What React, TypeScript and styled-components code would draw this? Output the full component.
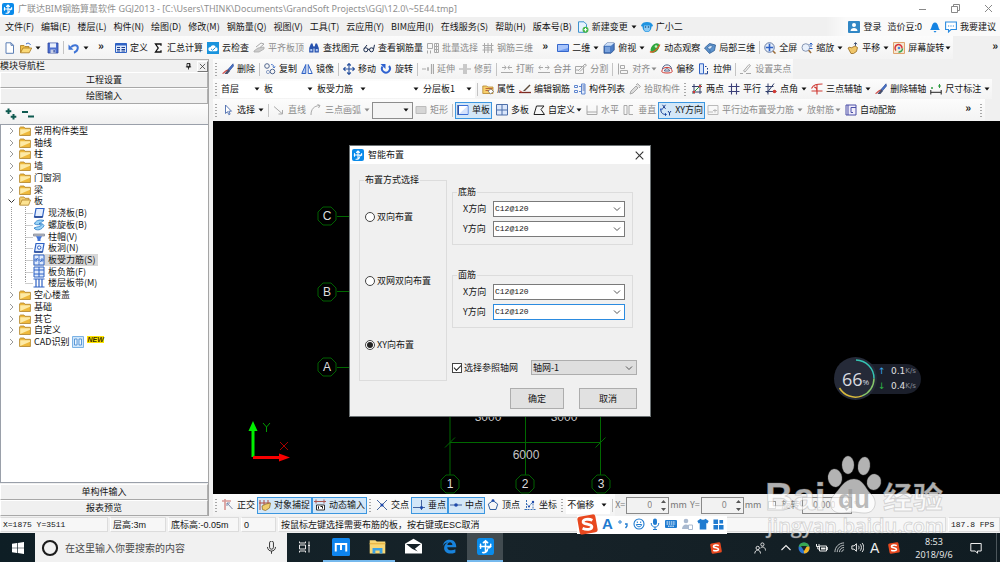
import React from "react";
import styled, { createGlobalStyle, css } from "styled-components";

const Global = createGlobalStyle`
  * { box-sizing: border-box; }
  html, body { margin: 0; padding: 0; }
  body, button, input, select {
    font-family: "Noto Sans CJK SC", sans-serif;
    font-size: 9px;
    line-height: 12px;
    color: #141414;
  }
  button, input, select { margin: 0; padding: 0; border: 0; border-radius: 0; background: transparent; outline: 0; }
  button { cursor: pointer; white-space: nowrap; }
  ul { list-style: none; margin: 0; padding: 0; }
`;

/* ---------- icons ---------- */

const B = "#2f62c4";
const N = "#1d3f8f";
const G = "#a9a9a9";
const R = "#cf3a34";

const art: Record<string, React.ReactNode> = {
  app: (
    <>
      <rect width="12" height="12" rx="2" fill="#0a8bea" />
      <path d="M6 2v8M4 10.2c1.500.4 3.400-.4 3.400-2M2.200 6h7.600M2.500 4.500v2.800M9.700 4.500c0 2-.8 2.500-2 2.500M4.500 3.300L6 2l1.500 1.300" fill="none" stroke="#fff" strokeWidth="1.100" strokeLinecap="round" />
    </>
  ),
  doc: <path d="M2 .8h5l2.500 2.500v8H2zM7 .8v2.500h2.500" fill="#fff" stroke="#5c7fb5" />,
  open: (
    <>
      <path d="M.5 10.500v-7h3.500l1 1h4v2" fill="#f0c04a" stroke="#a9781a" strokeWidth=".8" />
      <path d="M.5 10.800L3 6h8.700l-2.500 4.800z" fill="#fbd976" stroke="#a9781a" strokeWidth=".8" />
      <path d="M6 2c2-1.400 3.500-.8 4.500.8" fill="none" stroke={B} />
    </>
  ),
  save: (
    <>
      <path d="M1 1h10v10H1z" fill="#4d6fd0" stroke="#2c459c" strokeWidth=".8" />
      <path d="M3 1.300h6v4.200H3z" fill="#e9effc" />
      <path d="M3.500 7.500h5V11h-5z" fill="#c7cfe6" />
      <path d="M6.500 8h1.200v2.500H6.500z" fill="#2c459c" />
    </>
  ),
  undo: (
    <>
      <path d="M3 5.200C6 1.800 10 3 9.800 6c-.2 2.400-2 4-3.800 4.700" fill="none" stroke="#3f74d6" strokeWidth="2" />
      <path d="M.5 2.500v5.200h5z" fill="#3f74d6" />
    </>
  ),
  define: (
    <>
      <path d="M.5 1.500h11v9H.5z" fill="#dce8fb" stroke={B} />
      <path d="M.5 1.500h11v2H.5z" fill={B} />
      <path d="M2 5.500h3M2 7.500h3M2 9h3M6.500 5.500h3.500M6.500 7.500h3.500M6.500 9h3.500" stroke={N} />
    </>
  ),
  sigma: <path d="M9 3.800V2H3.500l2.700 4-2.700 4H9V8.200" fill="none" stroke="#111" strokeWidth="1.300" />,
  cloud: (
    <>
      <rect width="12" height="12" fill="#1993dd" />
      <path d="M3.500 9.300a2.200 2.200 0 010-4.400 2.800 2.800 0 015.300.4 2 2 0 01-.3 4z" fill="#fff" />
      <path d="M4 6.800l1.600 1.500L8.500 5.500" fill="none" stroke="#1993dd" />
    </>
  ),
  slabTop: (
    <>
      <path d="M1 9l4-3 6-1v2L6 10H1z" fill="#ccc" stroke={G} strokeWidth=".8" />
      <path d="M3 5l5-4 3 1-4 3.500" fill="none" stroke={G} />
    </>
  ),
  find: (
    <>
      <path d="M1.200 10.500V6L3 1.500h1.500L5.500 5v5.500zM10.800 10.500V6L9 1.500H7.500L6.500 5v5.500z" fill="#2752ae" />
      <path d="M5 4.500h2v2H5z" fill="#2752ae" />
      <path d="M2.300 7h2v2.300h-2zM7.800 7h2v2.300h-2z" fill="#a9c4f5" />
    </>
  ),
  glasses: (
    <path d="M.8 7.800a2 2 0 104 0 2 2 0 10-4 0M6.500 7.800a2 2 0 104 0 2 2 0 10-4 0M4.800 7.300h1.700M1 6.800L4 3M10.500 7.300l1-4.500" fill="none" stroke="#1a2b4d" />
  ),
  batch: (
    <path d="M.5 1.500h5v5h-5zM.5 8.500v3M3.500 8.500v3M7.500 1.500h4v9h-4zM7.500 4.500h4M7.500 7.500h4M9.500 1.500v9" fill="none" stroke={G} />
  ),
  rebar3d: (
    <path d="M2.500 1v10M6 1v10M9.500 1v10M.5 3.500h11M.5 8h11M2.500 5.800h7" fill="none" stroke={G} />
  ),
  flat2d: (
    <>
      <path d="M.5 2.500h11v7H.5z" fill="#6f9bf0" stroke="#3567cc" />
      <path d="M1 3h10v3L1 9z" fill="#a9c5fb" />
    </>
  ),
  cube: (
    <>
      <path d="M1 3.800L4 1h7.200v7L8 11.200H1z" fill="#4b7cc4" stroke="#2a4f8e" strokeWidth=".8" />
      <path d="M1 3.800L4 1h7.200L8 3.800z" fill="#cfe0f7" />
      <path d="M2 5h5v5H2z" fill="#7ba3dc" />
    </>
  ),
  orbit: (
    <>
      <ellipse cx="6" cy="6" rx="3.500" ry="5.500" fill="#2fa63e" transform="rotate(40 6 6)" />
      <path d="M1 9.500c2 2 7-1 10-7" fill="none" stroke="#e05b27" strokeWidth="1.200" />
      <circle cx="7" cy="4.500" r="1.300" fill="#c9f2c2" />
    </>
  ),
  local3d: (
    <>
      <path d="M.5 6l5-4.500 6 1.500-1 5.500-5 3z" fill="#5d93cd" stroke="#2d5c93" strokeWidth=".8" />
      <path d="M3 6l3-2.500 3 .8-3 3zM6 7.500v3" fill="#d5e6f8" stroke="#2d5c93" strokeWidth=".6" />
    </>
  ),
  full: (
    <>
      <circle cx="5.500" cy="5.500" r="4.800" fill="#e3edfb" stroke="#6b7fa5" />
      <path d="M5.500 1.800v7.400M1.800 5.500h7.400" stroke={B} strokeWidth="1.600" />
      <path d="M9 9l2.500 2.500" stroke="#9c6b35" strokeWidth="1.500" />
    </>
  ),
  zoom: (
    <>
      <circle cx="4.800" cy="5.500" r="3.800" fill="#e9f1fc" stroke="#8796b3" />
      <path d="M7.600 8.300l2.500 2.700" stroke="#9c6b35" strokeWidth="1.500" />
      <path d="M10 1v4M8.500 2.500L10 1l1.500 1.500M8.500 6.500h3" fill="none" stroke={B} />
    </>
  ),
  pan: (
    <>
      <path d="M1 6l2-1 1 1 4-2 2.500 1.500-1 4-3 2H4z" fill="#f0c66a" stroke="#94671b" strokeWidth=".8" />
      <path d="M8.500 3.800V.8M7 2.200L8.500.6 10 2.200" fill="none" stroke="#3c4d70" />
    </>
  ),
  screenRot: (
    <>
      <path d="M.5.5h11v11H.5z" fill="#f3e7d2" stroke="#e0a36d" />
      <path d="M3 8.500a3.500 3.500 0 116-2" fill="none" stroke="#d8343a" strokeWidth="1.500" />
      <path d="M9.500 6.500a3.500 3.500 0 01-4 3.500" fill="none" stroke="#38a353" strokeWidth="1.500" />
      <circle cx="6" cy="6" r="1.300" fill="#4b7fdc" />
    </>
  ),
  brush: (
    <>
      <path d="M11 .8L6 6.500l1.500 1.300L11.500 3z" fill="#4b74c9" stroke={N} strokeWidth=".6" />
      <path d="M6 6l2 2-2.500 3H2.500z" fill="#46506e" />
      <path d="M.5 10.500c2-.2 2.500-3 5-3.500" fill="none" stroke={R} strokeWidth="1.100" />
    </>
  ),
  copy: (
    <>
      <circle cx="3" cy="3" r="2.300" fill="none" stroke="#52678f" />
      <circle cx="8.500" cy="8.500" r="2.300" fill="none" stroke="#52678f" />
      <circle cx="4" cy="9" r="1.600" fill="none" stroke="#8ea1c7" />
      <path d="M7 1.500c2 0 3 1 3 3M8.800 3.500L10 5l1.200-1.500" fill="none" stroke={B} strokeWidth=".8" />
    </>
  ),
  mirror: (
    <>
      <path d="M4.800 1.500v9H.8z" fill="#b5ccf5" stroke={B} />
      <path d="M7.200 1.500v9h4z" fill="#fff" stroke={B} />
    </>
  ),
  move: (
    <path d="M6 .5v11M.5 6h11M4.200 2.500L6 .6l1.800 1.900M4.200 9.500L6 11.400l1.800-1.900M2.500 4.200L.6 6l1.900 1.800M9.500 4.200L11.400 6 9.500 7.800" fill="none" stroke="#27509d" strokeWidth="1.100" />
  ),
  rotate: (
    <>
      <path d="M2.500 3.500A4 4 0 109 3" fill="none" stroke="#2f62d0" strokeWidth="2" />
      <path d="M.5 1h5v5z" fill="#2f62d0" />
    </>
  ),
  extend: <path d="M0 6h4M5 6h2M9.500 1v10M11.500 1v10M6 4v4" stroke={G} strokeWidth="1.200" />,
  trim: <path d="M0 6h4M8 6h4M5 1v10M7 1v10" stroke={G} strokeWidth="1.200" />,
  breakIt: <path d="M0 9.500h12M1 4.500h4M7 4.500h4M3.500 2.500L5 4.500 3.500 6.500M8.500 2.500L7 4.500l1.500 2" fill="none" stroke={G} />,
  merge: <path d="M0 9.500h12M1 4.500h4M7 4.500h4M2.500 2.500L1 4.500l1.500 2M9.500 2.500l1.500 2-1.500 2" fill="none" stroke={G} />,
  split: <path d="M.5 3.500h8v7h-8zM3 8l7-7 1.500 1L5 8.500M.5 7h3" fill="none" stroke={G} />,
  align: <path d="M1.500.5v11M3.500 2.500h4v3h-4zM3.500 7.500h7v3h-7z" fill="none" stroke={G} />,
  offset: (
    <>
      <path d="M.8 8.500C.8 3 11.200 3 11.200 8.500c0 2-10.400 2-10.400 0" fill="none" stroke={R} />
      <path d="M1.500 6C2 .5 10 .5 10.500 6M3.500 8c0-3 5-3 5 0z" fill="none" stroke="#4e5f86" />
    </>
  ),
  stretch: (
    <>
      <path d="M1.500.8h4v10h-4z" fill="#d9e6fb" stroke={B} />
      <path d="M7 3.500h1.500M9.500 5v1.500M9.500 8v2.800H6.500" fill="none" stroke={N} />
    </>
  ),
  grip: <path d="M0 10.500h3M6 10.500h5M3.500 8L9 1.500l1.500 1L5 9z" fill="none" stroke={G} />,
  props: (
    <>
      <path d="M.8 3h4l1 1H11v6.500H.8z" fill="#f6cf6c" stroke="#b8862b" strokeWidth=".8" />
      <path d="M3.500 5.500h7M3.500 7.500h7" stroke="#a43c23" strokeWidth=".7" />
      <path d="M6 8l3-2 2.500 2.500-3 2.500z" fill="#fff" stroke="#555" strokeWidth=".6" />
    </>
  ),
  editBar: (
    <>
      <path d="M0 9.500h12" stroke="#7b2b22" strokeWidth="1.300" />
      <path d="M4 8l6.500-6.500 1 1L6 8z" fill="#5c4a3a" />
      <path d="M.5 7.500L3 9.300" stroke={R} />
    </>
  ),
  list: (
    <>
      <path d="M.5 2.500h3v2h-3zM.5 7.500h3v2h-3z" fill="#fff" stroke="#5f86cf" />
      <path d="M5 3.500h2M5 8.500h2" stroke="#5f86cf" />
      <path d="M7.500 1v10h3.500V1z" fill="#e3ecfb" stroke="#5f86cf" />
      <path d="M8.500 3h2M8.500 5h2M8.500 7h2" stroke={N} strokeWidth=".7" />
    </>
  ),
  pick: <path d="M1 11l1-3 5-5 2 2-5 5zM7 2l1.500-1.500 3 3L10 5" fill="#ddd" stroke={G} />,
  twoPt: (
    <>
      <path d="M1 3.500h10M1 9h10M3 1v10M9 1v10" stroke="#33406d" />
      <path d="M1.500 10.500L10.500 1.500" stroke="#2c9b41" />
      <circle cx="9" cy="3.300" r="1.200" fill={R} />
      <circle cx="3" cy="9" r="1.200" fill={R} />
    </>
  ),
  parallel: <path d="M.5 3.500h11M.5 8.500h11M3.500.5v11M8.500.5v11" stroke="#3b3f78" strokeWidth="1.100" />,
  ptAngle: (
    <>
      <path d="M.5 3.500h8M.5 8.500h11M3 .5v11M9 .5L2 10" stroke="#33406d" />
      <circle cx="9.500" cy="8.500" r="1.800" fill={R} />
    </>
  ),
  arcAxis: (
    <path d="M.5 5.500c2-4 5-4.500 11-4.500M.5 8h11M6 2v9.500M3 4c3 0 3 3 3 7" fill="none" stroke={R} strokeWidth="1.100" />
  ),
  dim: (
    <>
      <path d="M.8 7v4.500M11.200 7v4.500M.8 9.300h10.400" stroke="#222" />
      <circle cx="2" cy="5" r="1" fill="#2c9b41" />
      <path d="M9.500 1v4M8 3h3" stroke="#2c9b41" />
    </>
  ),
  cursor: <path d="M3.500 1v8.500l2-1.800 1.300 3 1.300-.6-1.300-2.900H9.500z" fill="#fff" stroke="#4a6bad" strokeWidth=".9" />,
  line: <path d="M1 2.500l8 7M9.500 6v4h-4" fill="none" stroke={G} />,
  arc: <path d="M1 11C1 5 4 2 9.500 1.500M7.500.5L10 1.500 8.500 4" fill="none" stroke={G} />,
  rect: <path d="M1 2.500h10v7H1z" fill="#d6d6d6" stroke="#bcbcbc" />,
  single: (
    <>
      <path d="M1.500 1.500h9.500v9H1.500z" fill="#fff" stroke="#3b6fd8" />
      <path d="M2 10l8.500-8v8z" fill="#d5e3fc" />
      <path d="M1 1v10" stroke={N} strokeWidth="1.200" />
    </>
  ),
  multi: (
    <>
      <path d="M.5.5h11v10.500H.5z" fill="#dbe7fb" stroke="#4d6fa9" />
      <path d="M6 .5v10.500M.5 6h11" stroke="#4d6fa9" />
    </>
  ),
  custom: <path d="M1 10.500L3.500 2h7.500L8 5.500l3.500 5H1z" fill="none" stroke="#222" />,
  horiz: <path d="M1 1.500v9h10v-9M1 8h10" fill="none" stroke={G} />,
  vert: <path d="M1 1.500h3v9h-3zM10 1.500H6v9h4" fill="none" stroke={G} />,
  xy: (
    <>
      <path d="M1 5c-.5 3 1 5.500 5 5.500M2.500.8l3 4M5.500.8l-3 4M8 7l1.500 2L11 7M9.500 9v2.500" fill="none" stroke={N} />
      <path d="M0 6.500l1-2 1.500 1.500M5 9l1.500 1.500L5 12" fill="none" stroke={B} />
    </>
  ),
  edge: <path d="M1 1.500h10v9H1zM1 8h5M8 5v3.500M6 6.500h4" fill="none" stroke="#bbb" />,
  auto: (
    <>
      <path d="M1 1h10v10H1z" fill="#f0edfa" stroke="#4a4fa6" />
      <path d="M3 1v10M6 3.500h5M6 3.500v5h2" fill="none" stroke="#4a4fa6" />
    </>
  ),
  newDoc: (
    <>
      <path d="M1.500.8h5.500l2.500 2.500v8h-8z" fill="#e6f2fd" stroke="#3d92cf" />
      <circle cx="8.500" cy="8.700" r="3" fill="#45b649" />
      <path d="M8.500 7v3.400M6.800 8.700h3.400" stroke="#fff" />
    </>
  ),
  robot: (
    <>
      <path d="M0 4.500C1 2 3 1 6 1s5 1 6 3.500c-.3 1-1 1-1.500 1C10.500 9 8.500 11 6 11S1.500 9 1.500 5.500c-.5 0-1.200 0-1.500-1z" fill="#1f93e0" />
      <path d="M3 4.500h6v3a3 3 0 01-6 0z" fill="#8ccbf5" />
      <circle cx="4.500" cy="6" r=".8" fill="#124a7d" />
      <circle cx="7.500" cy="6" r=".8" fill="#124a7d" />
    </>
  ),
  login: (
    <>
      <rect width="12" height="12" rx="1" fill="#3187c5" />
      <circle cx="6" cy="4" r="2" fill="#fff" />
      <path d="M2.500 10c0-4 7-4 7 0z" fill="#fff" />
    </>
  ),
  bell: (
    <>
      <path d="M1 9c2-1.500 1.500-7.500 5-7.500S9 7.500 11 9z" fill="#1583e2" />
      <path d="M4.500 10h3L6 11.800z" fill="#1583e2" />
    </>
  ),
  chat: (
    <>
      <path d="M.6 1h10.800v7.500H6L3.500 11V8.500H.6z" fill="#fff" stroke="#2a8be0" strokeWidth="1.100" />
      <path d="M3 5h1.200M5.400 5h1.200M7.800 5H9" stroke="#2a8be0" strokeWidth="1.200" />
    </>
  ),
  ortho: (
    <>
      <path d="M0 2h9M3 0v11" stroke="#d99a98" strokeWidth="1.700" />
      <path d="M5 4l5.500 6M5 4v3M5 4h3" fill="none" stroke="#7b88a8" />
    </>
  ),
  snap: (
    <>
      <path d="M1 1v10M5 1v5M0 4h11M9 1v4" stroke="#b04a40" />
      <path d="M3 7l4-2 4.500-1-1 5-4 2.500-3-1z" fill="#f0cd6c" stroke="#94702a" strokeWidth=".8" />
    </>
  ),
  dyn: (
    <>
      <path d="M0 2.500h12M2 .5v4M10 .5v4" stroke="#a95450" />
      <path d="M2.500 6h8v5h-8z" fill="#fff" stroke="#333" />
      <path d="M4.500 7.300v2.500M6.500 7.500h2v2" fill="none" stroke="#111" />
    </>
  ),
  cross: (
    <>
      <path d="M1 1l10 10M11 1L1 11" stroke="#44659f" />
      <circle cx="6" cy="6" r="1.600" fill="#1d49ab" />
    </>
  ),
  perp: (
    <>
      <path d="M0 8.500h12M8.500 1v10" stroke="#44659f" />
      <circle cx="8.500" cy="8.500" r="1.600" fill="#1d49ab" />
    </>
  ),
  mid: (
    <>
      <path d="M0 6h12" stroke="#44659f" />
      <circle cx="6" cy="6" r="1.800" fill="#1d49ab" />
    </>
  ),
  vertex: (
    <>
      <path d="M6 1.500l4.700 3.600L9 10.500H3L1.300 5.100z" fill="none" stroke="#33609f" />
      <circle cx="6" cy="1.600" r="1.400" fill="#1d49ab" />
    </>
  ),
  coord: (
    <>
      <path d="M.5 10.500h11M2.500 1v10M2.500 5L5 7.500 9 2.500v8" fill="none" stroke="#3b70b5" strokeDasharray="2 1" />
      <circle cx="9" cy="3" r="1.200" fill="#1d49ab" />
      <circle cx="5" cy="7.500" r="1" fill="#1d49ab" />
    </>
  ),
  plus2: (
    <path d="M3.500.5v5.500M.7 3.200h5.600M8.500 6v5.500M5.700 8.800h5.600" stroke="#0f5a50" strokeWidth="2" />
  ),
  minus2: <path d="M0 4h6M6 8.500h6" stroke="#0f5a50" strokeWidth="2" />,
  pin: <path d="M4 2h4v4.500H4zM2.500 6.500h7M6 6.500V10M7.200 2v4.500" fill="none" stroke="#111" strokeWidth="1.100" />,
  close: <path d="M2.500 2.500l7 7M9.500 2.500l-7 7" stroke="#333" strokeWidth="1" />,
  folder: (
    <>
      <path d="M.6 10.500V2.800L1.500 2H5l1 1.300h5.400v7.200z" fill="#eeb93c" stroke="#b08127" strokeWidth=".8" />
      <path d="M1.200 4.200h9.800v1.500L1.200 10z" fill="#fdeaa6" />
    </>
  ),
  folderOpen: (
    <>
      <path d="M.6 10V2.800L1.500 2H5l1 1.300h4V5" fill="#f4d072" stroke="#b08127" strokeWidth=".8" />
      <path d="M.8 10.200L3 5h8.600l-2 5.200z" fill="#fce392" stroke="#b08127" strokeWidth=".8" />
    </>
  ),
  tSlab: (
    <>
      <path d="M3 1.500h8l-1.500 8.500h-8z" fill="#e4eefe" stroke={B} strokeWidth="1.200" />
      <path d="M1.500 10h8" stroke={N} strokeWidth="1.600" />
    </>
  ),
  tSpiral: (
    <path d="M11 1.500C6 0 2 2 1.500 5c3 1.500 5 0 7 1-1.500 2-4 1.500-7.500 3 2 3 8 2.500 10-2.500-1-2-3-2-5-2C8 4 9 2.500 11 1.500z" fill="#9ad4f7" stroke="#2878c5" strokeWidth=".8" />
  ),
  tCap: (
    <>
      <path d="M.5 3h11v2H.5z" fill="#b7bcc5" stroke="#7b828f" strokeWidth=".7" />
      <path d="M3 5.200h6L7.500 8v2h-3V8z" fill="#4375d6" />
    </>
  ),
  tHole: (
    <>
      <path d="M3 1.500h8l-1.500 8.500h-8z" fill="#e4eefe" stroke={B} strokeWidth="1.200" />
      <circle cx="6.200" cy="5.600" r="1.700" fill="#fff" stroke={B} />
      <path d="M1.500 10h8" stroke={N} strokeWidth="1.400" />
    </>
  ),
  tForce: (
    <>
      <path d="M1 1h10v10H1z" fill="#e0ebfd" stroke={B} />
      <path d="M1 6h10M6 1v10M3 4v4M9 4v4M3 6l2-2M9 6L7 8" fill="none" stroke={B} strokeWidth=".8" />
    </>
  ),
  tNeg: (
    <>
      <path d="M1 1h10v10H1z" fill="#e0ebfd" stroke={B} />
      <path d="M1 4h10M1 8h10M6 1v10" fill="none" stroke={B} />
    </>
  ),
  tBand: <path d="M.5 2h11M.5 10h11M3 2v8M6 2v8M9 2v8" stroke={B} strokeWidth="1.200" />,
  cad: (
    <>
      <path d="M.5.5h11v11H.5z" fill="#cfe6fb" stroke="#7bb2e4" />
      <path d="M2.500 3h2.500v6H2.500zM7 3h2.500v6H7z" fill="#eef7ff" stroke="#3c83cd" strokeWidth=".8" />
    </>
  ),
  sogou: (
    <>
      <rect x=".8" y=".8" width="10.400" height="10.400" rx="1.500" fill="#e8481f" transform="rotate(-10 6 6)" />
      <path d="M8.800 3.600C6.500 2.500 3.400 3 3.500 4.600c.1 1.500 5 .9 5 2.700 0 1.700-3.200 1.900-5.300.9" fill="none" stroke="#fff" strokeWidth="1.600" />
    </>
  ),
  win: <path d="M0 1.700l5-.7v4.700H0zM5.700.9L12 0v5.700H5.700zM0 6.300h5V11l-5-.7zM5.700 6.300H12V12l-6.300-.9z" fill="#fff" />,
  ring: <circle cx="6" cy="6" r="4.700" fill="none" stroke="#1c1c1c" strokeWidth="1.400" />,
  mic: <path d="M4.200 1.800a1.800 1.800 0 013.600 0v4a1.800 1.800 0 01-3.600 0zM2.300 5.500c0 5 7.400 5 7.400 0M6 9.300v2.500" fill="none" stroke="#333" strokeWidth=".9" />,
  task: <path d="M.5.500v1.500h6V.5M.5 4h6v4h-6zM.5 11.500V10h6v1.500M10 .5v11M9 4.500h2" fill="none" stroke="#e8e8e8" />,
  max: (
    <>
      <rect width="12" height="12" rx="1" fill="#0f85ee" />
      <path d="M2.500 9V4h7v5M6 4v4" fill="none" stroke="#fff" strokeWidth="1.300" />
    </>
  ),
  explorer: (
    <>
      <path d="M.5 1.500h4l1 1h6v8.500H.5z" fill="#f8d775" />
      <path d="M.5 3.500h11v1H.5z" fill="#e9b84a" />
      <path d="M2.500 11V7h7v4h-2V8.800h-3V11z" fill="#3ba1e2" />
    </>
  ),
  mail: (
    <>
      <path d="M0 4l6-3.500L12 4v7H0z" fill="#fff" />
      <path d="M.8 4.300h10.400L7 7.500 9 9.500 5 7.500z" fill="#152127" />
    </>
  ),
  ie: (
    <path d="M.6 5.500C1.300 2 3.500.5 6.200.5c3.300 0 5.300 2.300 5.200 6H4.200c.2 2.700 3.600 3.200 6.500 1.700v2.500C6 13 1.500 11 1.700 7 1.800 5 3 3.500 4.800 2.800 2.800 2.900 1.500 4 .6 5.500zM4.300 4.700h4C8.300 2 4.600 2 4.300 4.700z" fill="#1883dc" />
  ),
  people: (
    <path d="M2 6a1.700 1.700 0 103.400 0A1.700 1.700 0 102 6M.8 11.500c0-4.500 5.700-4.500 5.700 0M6.800 2.500a1.600 1.600 0 103.200 0 1.600 1.600 0 10-3.200 0M6.500 6c2-2 5-.8 5 2.500" fill="none" stroke="#eee" strokeWidth=".9" />
  ),
  up: <path d="M1.500 8L6 3.500 10.500 8" fill="none" stroke="#eee" strokeWidth="1.100" />,
  tri: (
    <>
      <circle cx="6" cy="6" r="5.500" fill="#2b74d2" />
      <path d="M.7 4.500A5.500 5.500 0 0111.300 4.500L6 6z" fill="#38a852" />
      <path d="M11.300 4.500A5.500 5.500 0 016 11.500L5.500 5z" fill="#f4b526" />
      <path d="M3 4h6L6 9z" fill="#172228" />
    </>
  ),
  battery: (
    <>
      <path d="M3.500 4h7v5h-7zM10.500 5.500h1.200v2h-1.200" fill="none" stroke="#eee" />
      <path d="M5 5.500h4.500v2H5z" fill="#eee" />
      <path d="M.5 2v2.500h2.500V2M1.800 4.500V7h2" fill="none" stroke="#eee" />
    </>
  ),
  wifi: (
    <path d="M1 11C1 5.500 5.500 1 11 1M3.500 11C3.500 7 7 3.500 11 3.500M6 11c0-3 2-5 5-5M8.500 11c0-1.500 1-2.500 2.500-2.500" fill="none" stroke="#c9ced0" strokeWidth="1" />
  ),
  vol: (
    <path d="M.8 4.500h2L5 2.500v7l-2.200-2h-2zM6.800 4.300c.8 1 .8 2.400 0 3.400M8.500 3c1.500 1.700 1.500 4.300 0 6M10.200 1.800c2 2.300 2 6.100 0 8.400" fill="none" stroke="#eee" strokeWidth=".9" />
  ),
  notif: <path d="M.8 1.500h10.400v7.500H7.500v2.300L5.300 9H.8z" fill="none" stroke="#eee" />,
  smile: (
    <>
      <circle cx="6" cy="6" r="5" fill="none" stroke="#1f7bd0" strokeWidth="1.100" />
      <path d="M3.300 6.500c.5 3 4.900 3 5.400 0z" fill="none" stroke="#1f7bd0" />
      <path d="M4.300 3.500v1.500M7.700 3.500v1.500" stroke="#1f7bd0" />
    </>
  ),
  micBlue: (
    <>
      <rect x="4" y=".5" width="4" height="6.500" rx="2" fill="#1f7bd0" />
      <path d="M2.200 5c0 5.500 7.600 5.500 7.600 0M6 9v2.500M4 11.500h4" fill="none" stroke="#1f7bd0" />
    </>
  ),
  kb: (
    <>
      <rect y="2" width="12" height="8" rx="1" fill="#1f7bd0" />
      <path d="M1.500 4h9M1.500 6h9M3 8.200h6" stroke="#fff" strokeDasharray="1.500 .7" />
    </>
  ),
  person: (
    <>
      <circle cx="5" cy="3" r="2.300" fill="#a9b9cf" />
      <path d="M1 11c0-6 8-6 8 0z" fill="#a9b9cf" />
      <path d="M7.500 7h4v4.500h-4z" fill="#fff" stroke="#a9b9cf" />
    </>
  ),
  shirt: <path d="M.3 3L3.500.8c1 1.400 4 1.400 5 0L11.700 3l-1.300 2.500L9.300 5v6.500H2.700V5l-1.100.5z" fill="#1f7bd0" />,
  tiles: <path d="M.5.5h5v5h-5zM.5 6.500h5v5h-5zM6.500 6.500h5v5h-5zM7 1h4v4H7z" fill="#1f7bd0" />,
  comma: (
    <>
      <circle cx="3" cy="4" r="1.200" fill="none" stroke="#1f7bd0" />
      <path d="M8 6h2v2l-1.500 2" fill="none" stroke="#1f7bd0" strokeWidth="1.300" />
    </>
  ),
};

const IconSvg = styled.svg<{ $s: number }>`
  display: block;
  flex: none;
  width: ${(p) => p.$s}px;
  height: ${(p) => p.$s}px;
`;

const Icon = ({ name, size = 12 }: { name: string; size?: number }) => (
  <IconSvg $s={size} viewBox="0 0 12 12" aria-hidden="true">
    {art[name]}
  </IconSvg>
);

const CaretSvg = styled.svg<{ $tight?: boolean }>`
  flex: none;
  width: 6px;
  height: 4px;
  margin-left: ${(p) => (p.$tight ? "-2px" : 0)};
`;
const Caret = ({ dim, tight }: { dim?: boolean; tight?: boolean }) => (
  <CaretSvg $tight={tight} viewBox="0 0 6 4" aria-hidden="true">
    <path d="M.5.5h5L3 3.500z" fill={dim ? "#8a8a8a" : "#111"} />
  </CaretSvg>
);

const Chevron = () => (
  <svg width="8" height="6" viewBox="0 0 8 6" aria-hidden="true">
    <path d="M1 1.500l3 3 3-3" fill="none" stroke="#555" />
  </svg>
);

/* ---------- frame ---------- */

const Page = styled.div`
  display: flex;
  flex-direction: column;
  min-height: 100vh;
  background: #f0f0f0;
  position: relative;
  overflow: hidden;
`;

const TitleBar = styled.header`
  display: flex;
  align-items: center;
  gap: 4px;
  height: 17px;
  padding: 0 6px 0 2px;
  background: #fff;
  color: #8f8f8f;
  white-space: nowrap;
`;
const TitleText = styled.span`
  flex: 1;
  font-family: "Noto Sans", "Noto Sans CJK SC", sans-serif;
`;
const WindowButtons = styled.div`
  display: flex;
  gap: 22px;
`;
const WindowButton = styled.button`
  width: 11px;
  height: 11px;
`;

const MenuBar = styled.nav`
  display: flex;
  align-items: center;
  height: 19px;
  padding-left: 5px;
  white-space: nowrap;
`;
const MenuList = styled.div`
  display: flex;
  gap: 7px;
  margin-right: 3px;
`;
const Account = styled.div`
  display: flex;
  align-items: center;
  height: 19px;
  margin-left: auto;
  padding: 0 2px 0 20px;
  background: linear-gradient(90deg, #f0f0f0, #fafafa 20px);
`;

const ToolRow = styled.div<{ $h: number }>`
  display: flex;
  align-items: center;
  height: ${(p) => p.$h}px;
  flex: none;
  overflow: hidden;
`;
const ToolGroup = styled.div`
  display: flex;
  align-items: center;
  height: 100%;
  background: linear-gradient(#fcfcfc, #f3f3f3);
`;
const ToolButton = styled.button<{ $on?: boolean; $dim?: boolean }>`
  display: flex;
  flex: none;
  align-items: center;
  gap: 3px;
  height: 17px;
  padding: 0 1px;
  border: 1px solid transparent;
  color: #141414;
  ${(p) => p.$dim && css`color: #8c8c8c;`}
  ${(p) => p.$on && css`border-color: #3c97e0; background: #d3e7f8;`}
`;
const Sep = styled.span`
  flex: none;
  width: 1px;
  height: 13px;
  margin: 0 2px;
  background: #c4c4c4;
`;
const Grip = styled.span`
  flex: none;
  width: 2px;
  height: 13px;
  margin: 0 3px 0 2px;
  background: repeating-linear-gradient(#a8a8a8 0 1px, transparent 1px 3px);
`;
const Gap = styled.span<{ $w: number }>`
  flex: none;
  width: ${(p) => p.$w}px;
`;
const Overflow = styled.button`
  flex: none;
  width: 20px;
  height: 17px;
  padding-bottom: 6px;
  font-weight: 700;
  font-size: 11px;
  line-height: 10px;
`;

type ToolProps = { icon?: string; text?: string; on?: boolean; dim?: boolean; caret?: boolean; tight?: boolean; label?: string };
const Tool = ({ icon, text, on, dim, caret, tight, label }: ToolProps) => (
  <ToolButton type="button" $on={on} $dim={dim} aria-label={label}>
    {icon && <Icon name={icon} />}
    {text}
    {(caret || tight) && <Caret dim={dim} tight={tight} />}
  </ToolButton>
);

const SelectBox = styled.span<{ $w: number; $edge?: string; $bg?: string; $h?: number }>`
  display: flex;
  flex: none;
  align-items: center;
  width: ${(p) => p.$w}px;
  height: ${(p) => p.$h ?? 17}px;
  padding: 0 3px 0 1px;
  background: ${(p) => p.$bg ?? "#fff"};
  border: ${(p) => (p.$edge ? `1px solid ${p.$edge}` : "0")};
`;
const PlainSelect = styled.select<{ $mono?: boolean }>`
  appearance: none;
  flex: 1;
  min-width: 0;
  ${(p) => p.$mono && css`font-family: "Liberation Mono", monospace; font-size: 8px;`}
`;
const ToolSelect = ({ w, value, label, edge }: { w: number; value: string; label: string; edge?: string }) => (
  <SelectBox $w={w} $edge={edge} $bg={edge ? "#f4f4f4" : undefined}>
    <PlainSelect aria-label={label} defaultValue={value}>
      <option>{value}</option>
    </PlainSelect>
    <Caret />
  </SelectBox>
);

/* ---------- navigation panel ---------- */

const Work = styled.div`
  display: flex;
  flex: 1;
  min-height: 0;
`;
const Side = styled.aside`
  display: flex;
  flex-direction: column;
  flex: none;
  width: 209px;
  margin-right: 4px;
  border-right: 1px solid #a5a5a5;
`;
const SideHead = styled.div`
  display: flex;
  align-items: center;
  height: 13px;
  border-top: 1px solid #b0b0b0;
  span { flex: 1; }
`;
const SideClose = styled.button`
  width: 11px;
  height: 11px;
  margin-left: 4px;
  border: 1px solid;
  border-color: #fff #777 #777 #fff;
`;
const SideButton = styled.button`
  height: 16px;
  border: 1px solid;
  border-color: #fff #b0b0b0 #a8a8a8 #fff;
  background: #f0f0f0;
`;
const SideTools = styled.div`
  display: flex;
  align-items: center;
  gap: 5px;
  height: 20px;
  padding-left: 5px;
  background: linear-gradient(#fdfdfd, #f0f0f0);
  button { height: 12px; }
`;
const TreeBox = styled.div`
  flex: 1;
  border: 1px solid #9aa0aa;
  border-width: 1px 0 1px 1px;
  background: #fff;
  margin-bottom: 1px;
`;
const Tree = styled.ul`
  display: grid;
  grid-auto-rows: 1fr;
  height: 223px;
`;
const TreeRow = styled.li`
  display: flex;
  align-items: center;
  padding-left: 5px;
  white-space: nowrap;
  min-height: 0;
`;
const Toggle = styled.svg`
  width: 10px;
  height: 8px;
  margin-right: 3px;
`;
const Guides = styled.svg`
  flex: none;
  width: 22px;
  height: 12px;
  margin-left: 5px;
`;
const Node = styled.span<{ $sel?: boolean }>`
  display: flex;
  align-items: center;
  gap: 3px;
  height: 12px;
  padding-right: 3px;
  background: ${(p) => (p.$sel ? "#d9d9d9" : "transparent")};
`;
const NewTag = styled.b`
  align-self: flex-start;
  height: 7px;
  background: #ffe400;
  color: #3a3000;
  font: italic 700 7px/7px "Liberation Sans", sans-serif;
`;

const tree: { text: string; icon?: string; open?: boolean; sel?: boolean; fresh?: boolean; last?: boolean }[] = [
  { text: "常用构件类型" },
  { text: "轴线" },
  { text: "柱" },
  { text: "墙" },
  { text: "门窗洞" },
  { text: "梁" },
  { text: "板", open: true },
  { text: "现浇板(B)", icon: "tSlab" },
  { text: "螺旋板(B)", icon: "tSpiral" },
  { text: "柱帽(V)", icon: "tCap" },
  { text: "板洞(N)", icon: "tHole" },
  { text: "板受力筋(S)", icon: "tForce", sel: true },
  { text: "板负筋(F)", icon: "tNeg" },
  { text: "楼层板带(M)", icon: "tBand", last: true },
  { text: "空心楼盖" },
  { text: "基础" },
  { text: "其它" },
  { text: "自定义" },
  { text: "CAD识别", fresh: true },
];

const Navigation = () => (
  <Side>
    <SideHead>
      <span>模块导航栏</span>
      <button type="button" aria-label="固定"><Icon name="pin" size={9} /></button>
      <SideClose type="button" aria-label="关闭"><Icon name="close" size={9} /></SideClose>
    </SideHead>
    <SideButton type="button">工程设置</SideButton>
    <SideButton type="button">绘图输入</SideButton>
    <SideTools>
      <button type="button" aria-label="展开"><Icon name="plus2" /></button>
      <button type="button" aria-label="折叠"><Icon name="minus2" /></button>
    </SideTools>
    <TreeBox>
      <Tree>
        {tree.map((n) =>
          n.icon ? (
            <TreeRow key={n.text}>
              <Guides viewBox="0 0 22 12" aria-hidden="true">
                <path d={`M.5 0v12M14.500 0v${n.last ? 6 : 12}M14.500 6.500h7`} stroke="#9a9a9a" strokeDasharray="1 1" fill="none" />
              </Guides>
              <Node $sel={n.sel}>
                <Icon name={n.icon} />
                {n.text}
              </Node>
            </TreeRow>
          ) : (
            <TreeRow key={n.text}>
              <Toggle viewBox="0 0 10 8" aria-hidden="true">
                <path d={n.open ? "M2.500 2.500l3 3 3-3" : "M4 1l3 3-3 3"} fill="none" stroke={n.open ? "#333" : "#999"} />
              </Toggle>
              <Node>
                <Icon name={n.open ? "folderOpen" : "folder"} />
                {n.text}
                {n.fresh && (
                  <>
                    <Icon name="cad" />
                    <NewTag>NEW</NewTag>
                  </>
                )}
              </Node>
            </TreeRow>
          )
        )}
      </Tree>
    </TreeBox>
    <SideButton type="button">单构件输入</SideButton>
    <SideButton type="button">报表预览</SideButton>
  </Side>
);

/* ---------- drawing area ---------- */

const Main = styled.main`
  display: flex;
  flex-direction: column;
  flex: 1;
  min-width: 0;
`;
const Canvas = styled.section`
  position: relative;
  flex: 1;
  min-height: 373px;
  background: #000;
  overflow: hidden;
`;
const Drawing = styled.svg`
  display: block;
  width: 787px;
  height: 373px;
  font-family: "Liberation Sans", sans-serif;
  font-size: 12px;
`;

const Bubble = ({ x, y, t }: { x: number; y: number; t: string }) => (
  <g>
    <path
      d={`M${x - 4} ${y - 9}h8l5 5v8l-5 5h-8l-5-5v-8z`}
      fill="#000"
      stroke="#006000"
    />
    <text x={x} y={y + 4} fill="#dedede" textAnchor="middle">{t}</text>
  </g>
);

const Axes = () => (
  <Drawing viewBox="0 0 787 373" aria-label="轴网">
    <g stroke="#006800" fill="none">
      <path d="M124 95.500h60M124 170.500h60M124 246.500h60" />
      <path d="M237 250.500V354M312.500 250v104M387.500 250v104M237 321.500h151M232 326.500l10-10M382.500 326.500l10-10" />
    </g>
    <g fill="#c4c4c4" textAnchor="middle">
      <text x="275" y="300">3000</text>
      <text x="351" y="300">3000</text>
      <text x="313" y="338">6000</text>
    </g>
    <Bubble x={114} y={95} t="C" />
    <Bubble x={114} y={171} t="B" />
    <Bubble x={114} y={246} t="A" />
    <Bubble x={237} y={363} t="1" />
    <Bubble x={312} y={363} t="2" />
    <Bubble x={388} y={363} t="3" />
    <path d="M38.500 336h3v-26h3l-4.500-10-4.500 10h3z" fill="#00f000" />
    <path d="M40 335v3h26v2.500l11-4-11-4v2.500z" fill="#f80000" />
    <path d="M50 302l3.500 4 3.500-4M53.500 306v5" stroke="#009a00" fill="none" />
    <path d="M67 321l8 8M75 321l-8 8" stroke="#a80000" fill="none" />
  </Drawing>
);

const Gauge = styled.div`
  position: absolute;
  left: 621px;
  top: 236px;
  display: flex;
  align-items: center;
`;
const Dial = styled.div`
  position: relative;
  z-index: 1;
  display: flex;
  align-items: center;
  justify-content: center;
  width: 43px;
  height: 43px;
  border-radius: 50%;
  background: #252a38;
  color: #d9dbe0;
  font: 18px/20px "Open Sans", sans-serif;
  small { font-size: 8px; align-self: center; padding-top: 6px; }
  svg { position: absolute; inset: 0; }
`;
const Speeds = styled.div`
  width: 54px;
  height: 30px;
  margin-left: -10px;
  padding-left: 10px;
  border-radius: 0 15px 15px 0;
  background: #1b1f2b;
`;
const Speed = styled.div<{ $c: string }>`
  display: flex;
  align-items: center;
  height: 15px;
  color: #e0e0e0;
  font: 9px/12px "DejaVu Sans", sans-serif;
  i { width: 14px; padding-left: 1px; color: ${(p) => p.$c}; font-style: normal; }
  small { color: #8b8f99; font-size: 7px; }
`;

/* ---------- dialog ---------- */

const Dialog = styled.form`
  position: absolute;
  left: 136px;
  top: 24px;
  width: 302px;
  height: 272px;
  border: 1px solid #6d7375;
  background: #f0f0f0;
`;
const DialogTitle = styled.div`
  display: flex;
  align-items: center;
  gap: 4px;
  height: 18px;
  padding: 0 4px 0 2px;
  background: #fff;
  span { flex: 1; }
`;
const DialogBody = styled.div`
  display: flex;
  align-items: flex-start;
  gap: 5px;
  padding: 10px 13px 10px 9px;
`;
const Group = styled.fieldset`
  min-width: 0;
  margin: 0;
  padding: 3px 7px 7px 10px;
  border: 1px solid #dcdcdc;
  legend { margin-left: -6px; padding: 0 1px; line-height: 12px; }
`;
const ModeGroup = styled(Group)`
  width: 88px;
  padding: 25px 0 28px 5px;
  legend { margin-left: -1px; }
`;
const Modes = styled.div`
  display: flex;
  flex-direction: column;
  gap: 52px;
  padding-bottom: 1px;
`;
const Check = styled.label`
  display: flex;
  align-items: center;
  gap: 2px;
  height: 12px;
  white-space: nowrap;
  input {
    appearance: none;
    flex: none;
    display: grid;
    place-items: center;
    width: 10px;
    height: 10px;
    border: 1px solid #444;
    background: #fff;
  }
  input[type="radio"] { border-radius: 50%; }
  input[type="radio"]:checked::before {
    content: "";
    width: 6px;
    height: 6px;
    border-radius: 50%;
    background: #222;
  }
  input[type="checkbox"]:checked::before {
    content: "";
    width: 6px;
    height: 3px;
    margin-bottom: 2px;
    border: solid #222;
    border-width: 0 0 1px 1px;
    transform: rotate(-45deg);
  }
`;
const Settings = styled.div`
  display: flex;
  flex-direction: column;
  flex: 1;
  padding-top: 12px;
`;
const BarGroup = styled(Group)`
  margin: 0 4px 24px 0;
`;
const Fields = styled.div`
  display: grid;
  gap: 4px;
`;
const Field = styled.label`
  display: flex;
  align-items: center;
  gap: 7px;
  span:first-child { width: 23px; white-space: nowrap; }
`;
const RefRow = styled.div`
  display: flex;
  align-items: center;
  justify-content: space-between;
  margin-top: 8px;
`;
const Actions = styled.div`
  display: flex;
  justify-content: flex-end;
  gap: 15px;
  margin-top: 13px;
`;
const Push = styled.button`
  width: 54px;
  height: 21px;
  border: 1px solid #adadad;
  background: #e1e1e1;
  &:last-child { width: 58px; }
`;

const BarField = ({ label, focus }: { label: string; focus?: boolean }) => (
  <Field>
    <span>{label}</span>
    <SelectBox $w={132} $h={16} $edge={focus ? "#2b8be0" : "#7a7a7a"}>
      <PlainSelect $mono defaultValue="C12@120">
        <option>C12@120</option>
      </PlainSelect>
      <Chevron />
    </SelectBox>
  </Field>
);

const SmartDialog = () => (
  <Dialog onSubmit={(e) => e.preventDefault()} aria-label="智能布置">
    <DialogTitle>
      <Icon name="app" />
      <span>智能布置</span>
      <button type="button" aria-label="关闭"><Icon name="close" size={13} /></button>
    </DialogTitle>
    <DialogBody>
      <ModeGroup>
        <legend>布置方式选择</legend>
        <Modes>
          <Check><input type="radio" name="mode" />双向布置</Check>
          <Check><input type="radio" name="mode" />双网双向布置</Check>
          <Check><input type="radio" name="mode" defaultChecked />XY向布置</Check>
        </Modes>
      </ModeGroup>
      <Settings>
        <BarGroup>
          <legend>底筋</legend>
          <Fields>
            <BarField label="X方向" />
            <BarField label="Y方向" />
          </Fields>
        </BarGroup>
        <BarGroup>
          <legend>面筋</legend>
          <Fields>
            <BarField label="X方向" />
            <BarField label="Y方向" focus />
          </Fields>
        </BarGroup>
        <RefRow>
          <Check><input type="checkbox" defaultChecked />选择参照轴网</Check>
          <SelectBox $w={106} $h={15} $edge="#adadad" $bg="#dedede">
            <PlainSelect aria-label="轴网" defaultValue="轴网-1">
              <option>轴网-1</option>
            </PlainSelect>
            <Chevron />
          </SelectBox>
        </RefRow>
        <Actions>
          <Push type="submit">确定</Push>
          <Push type="button">取消</Push>
        </Actions>
      </Settings>
    </DialogBody>
  </Dialog>
);

/* ---------- bottom bars ---------- */

const Spin = styled.label`
  display: flex;
  align-items: center;
  gap: 1px;
  color: #777;
`;
const SpinBox = styled.span<{ $w: number }>`
  display: flex;
  align-items: center;
  width: ${(p) => p.$w}px;
  height: 17px;
  padding-right: 2px;
  border: 1px solid #8a8a8a;
  background: #f2f2f2;
  input { flex: 1; min-width: 0; padding-right: 9px; text-align: right; color: #888; }
`;
const SpinArrows = () => (
  <svg width="5" height="13" viewBox="0 0 5 13" aria-hidden="true">
    <path d="M0 4h5L2.500 1zM0 9h5L2.500 12z" fill="#555" />
  </svg>
);
const Tick = styled.label`
  display: flex;
  align-items: center;
  gap: 5px;
  margin: 0 3px 0 7px;
  color: #777;
  input { appearance: none; width: 8px; height: 8px; border: 1px solid #999; background: #fff; }
`;

const Status = styled.footer`
  position: relative;
  display: flex;
  align-items: center;
  gap: 2px;
  height: 17px;
  font-family: "Liberation Sans", "Noto Sans CJK SC", sans-serif;
`;
const Cell = styled.span<{ $w?: number; $mono?: boolean }>`
  flex: ${(p) => (p.$w ? "none" : 1)};
  width: ${(p) => (p.$w ? `${p.$w}px` : "auto")};
  height: 15px;
  padding: 1px 2px;
  border: 1px solid #dcdcdc;
  border-left-color: #fff;
  background: #f7f7f7;
  white-space: nowrap;
  ${(p) => p.$mono && css`font-family: "Liberation Mono", monospace; font-size: 8px;`}
`;
const Ime = styled.div`
  position: absolute;
  left: 577px;
  top: -2px;
  display: flex;
  align-items: center;
  gap: 4px;
  height: 20px;
  padding-right: 3px;
  background: linear-gradient(transparent 2px, #fff 2px);
  color: #1f7bd0;
  font: 700 15px/18px "Liberation Sans", sans-serif;
`;

const Taskbar = styled.div`
  display: flex;
  align-items: center;
  height: 29px;
  flex: none;
  background: linear-gradient(90deg, #0e1e25, #172329 50%, #101c22);
  color: #eee;
`;
const StartButton = styled.button`
  display: grid;
  place-items: center;
  width: 35px;
  height: 29px;
`;
const Search = styled.label`
  display: flex;
  align-items: center;
  gap: 6px;
  width: 252px;
  height: 29px;
  padding: 0 9px 0 6px;
  background: #f1f1f1;
  input { flex: 1; min-width: 0; font-size: 10px; }
  input::placeholder { color: #4a4a4a; opacity: 1; }
`;
const TaskButton = styled.button<{ $run?: boolean; $on?: boolean }>`
  display: grid;
  place-items: center;
  width: 36px;
  height: 29px;
  border-bottom: 2px solid ${(p) => (p.$run ? "#76b9ed" : "transparent")};
  background: ${(p) => (p.$on ? "#414b50" : "transparent")};
`;
const Tray = styled.div`
  display: flex;
  align-items: center;
  gap: 6px;
  margin-left: auto;
`;
const Letter = styled.span`
  width: 12px;
  font: 14px/16px "Liberation Sans", sans-serif;
`;
const Clock = styled.time`
  width: 50px;
  margin: 0 5px 0 3px;
  text-align: center;
  font: 9px/13px "Open Sans", sans-serif;
`;
const ShowDesktop = styled.span`
  width: 4px;
  height: 29px;
  margin-left: 8px;
  border-left: 1px solid #4c565b;
`;

const Watermark = styled.svg`
  position: absolute;
  right: 50px;
  bottom: 14px;
  width: 186px;
  height: 96px;
  pointer-events: none;
`;

const menus = ["文件(F)", "编辑(E)", "楼层(L)", "构件(N)", "绘图(D)", "修改(M)", "钢筋量(Q)", "视图(V)", "工具(T)", "云应用(Y)", "BIM应用(I)", "在线服务(S)", "帮助(H)", "版本号(B)"];

export default function App() {
  return (
    <Page>
      <Global />
      <TitleBar>
        <Icon name="app" />
        <TitleText>广联达BIM钢筋算量软件 GGJ2013 - [C:\Users\THINK\Documents\GrandSoft Projects\GGJ\12.0\~5E44.tmp]</TitleText>
        <WindowButtons>
          <WindowButton type="button" aria-label="最小化">
            <svg width="11" height="11"><path d="M2 6.500h7" stroke="#888" /></svg>
          </WindowButton>
          <WindowButton type="button" aria-label="还原">
            <svg width="11" height="11"><path d="M1.500 3.500h6v6h-6zM3.500 3.500v-2h6v6h-2" fill="none" stroke="#888" /></svg>
          </WindowButton>
          <WindowButton type="button" aria-label="关闭窗口">
            <svg width="11" height="11"><path d="M2 2l7 7M9 2L2 9" stroke="#888" /></svg>
          </WindowButton>
        </WindowButtons>
      </TitleBar>

      <MenuBar>
        <MenuList>
          {menus.map((m) => <button type="button" key={m}>{m}</button>)}
        </MenuList>
        <Tool icon="newDoc" text="新建变更" caret />
        <Tool icon="robot" text="广小二" />
        <Account>
          <Tool icon="login" text="登录" />
          <Gap $w={2} />
          <Tool text="造价豆:0" />
          <Gap $w={3} />
          <Tool icon="bell" label="通知" />
          <Tool icon="chat" text="我要建议" />
        </Account>
      </MenuBar>

      <ToolRow $h={23}>
        <ToolGroup>
          <Gap $w={2} />
          <Tool icon="doc" label="新建" />
          <Tool icon="open" caret label="打开" />
          <Gap $w={2} />
          <Tool icon="save" label="保存" />
          <Sep />
          <Tool icon="undo" caret label="撤销" />
          <Overflow type="button">»</Overflow>
          <Gap $w={2} />
          <Tool icon="define" text="定义" />
          <Tool icon="sigma" text="汇总计算" />
          <Tool icon="cloud" text="云检查" />
          <Tool icon="slabTop" text="平齐板顶" dim />
          <Tool icon="find" text="查找图元" />
          <Tool icon="glasses" text="查看钢筋量" />
          <Tool icon="batch" text="批量选择" dim />
          <Tool icon="rebar3d" text="钢筋三维" dim />
          <Overflow type="button">»</Overflow>
          <Tool icon="flat2d" text="二维" caret />
          <Tool icon="cube" text="俯视" caret />
          <Tool icon="orbit" text="动态观察" />
          <Tool icon="local3d" text="局部三维" />
          <Sep />
          <Tool icon="full" text="全屏" />
          <Tool icon="zoom" text="缩放" caret />
          <Tool icon="pan" text="平移" caret />
          <Tool icon="screenRot" text="屏幕旋转" tight />
        </ToolGroup>
        <Gap $w={32} />
        <Overflow type="button">»</Overflow>
      </ToolRow>

      <Work>
        <Navigation />
        <Main>
          <ToolRow $h={20}>
            <ToolGroup>
              <Grip />
              <Tool icon="brush" text="删除" />
              <Sep />
              <Tool icon="copy" text="复制" />
              <Tool icon="mirror" text="镜像" />
              <Sep />
              <Tool icon="move" text="移动" />
              <Tool icon="rotate" text="旋转" />
              <Sep />
              <Tool icon="extend" text="延伸" dim />
              <Tool icon="trim" text="修剪" dim />
              <Sep />
              <Tool icon="breakIt" text="打断" dim />
              <Tool icon="merge" text="合并" dim />
              <Tool icon="split" text="分割" dim />
              <Sep />
              <Tool icon="align" text="对齐" dim tight />
              <Tool icon="offset" text="偏移" />
              <Tool icon="stretch" text="拉伸" />
              <Sep />
              <Tool icon="grip" text="设置夹点" dim />
            </ToolGroup>
          </ToolRow>
          <ToolRow $h={20}>
            <ToolGroup>
              <Grip />
              <ToolSelect w={43} value="首层" label="楼层" />
              <ToolSelect w={53} value="板" label="构件大类" />
              <ToolSelect w={53} value="板受力筋" label="构件类型" />
              <ToolSelect w={53} value="" label="构件" />
              <ToolSelect w={53} value="分层板1" label="分层" />
              <Sep />
              <Tool icon="props" text="属性" />
              <Tool icon="editBar" text="编辑钢筋" />
              <Tool icon="list" text="构件列表" />
              <Tool icon="pick" text="拾取构件" dim />
              <Grip />
              <Tool icon="twoPt" text="两点" />
              <Tool icon="parallel" text="平行" />
              <Tool icon="ptAngle" text="点角" caret />
              <Tool icon="arcAxis" text="三点辅轴" caret />
              <Tool icon="brush" text="删除辅轴" />
              <Tool icon="dim" text="尺寸标注" caret />
            </ToolGroup>
          </ToolRow>
          <ToolRow $h={22}>
            <ToolGroup>
              <Grip />
              <Tool icon="cursor" text="选择" caret />
              <Sep />
              <Tool icon="line" text="直线" dim />
              <Tool icon="arc" text="三点画弧" dim caret />
              <ToolSelect w={41} value="" label="半径" edge="#8d8d8d" />
              <Tool icon="rect" text="矩形" dim />
              <Sep />
              <Tool icon="single" text="单板" on />
              <Gap $w={2} />
              <Tool icon="multi" text="多板" />
              <Tool icon="custom" text="自定义" tight />
              <Tool icon="horiz" text="水平" dim />
              <Tool icon="vert" text="垂直" dim />
              <Tool icon="xy" text="XY方向" on />
              <Tool icon="edge" text="平行边布置受力筋" dim caret />
              <Tool text="放射筋" dim tight />
              <Tool icon="auto" text="自动配筋" />
              <Gap $w={60} />
              <Overflow type="button">»</Overflow>
              <Grip />
            </ToolGroup>
          </ToolRow>

          <Canvas>
            <Axes />
            <SmartDialog />
            <Gauge>
              <Dial>
                66<small>%</small>
                <svg width="43" height="43" viewBox="0 0 43 43" aria-hidden="true">
                  <path d="M22 3a18.500 18.500 0 0118 18.500" fill="none" stroke="#35c5b4" strokeWidth="1.500" />
                  <path d="M40 21.500a18.500 18.500 0 01-12 17.400" fill="none" stroke="#86c76b" strokeWidth="1.500" />
                  <path d="M28 38.900A18.500 18.500 0 015.500 31" fill="none" stroke="#d8b93c" strokeWidth="1.500" />
                </svg>
              </Dial>
              <Speeds>
                <Speed $c="#3aa5ea"><i>↑</i>0.1<small>K/s</small></Speed>
                <Speed $c="#2fb344"><i>↓</i>0.4<small>K/s</small></Speed>
              </Speeds>
            </Gauge>
          </Canvas>

          <ToolRow $h={22}>
            <ToolGroup>
              <Grip />
              <Tool icon="ortho" text="正交" />
              <Tool icon="snap" text="对象捕捉" on />
              <Tool icon="dyn" text="动态输入" on />
              <Grip />
              <Tool icon="cross" text="交点" />
              <Tool icon="perp" text="垂点" on />
              <Tool icon="mid" text="中点" on />
              <Tool icon="vertex" text="顶点" />
              <Tool icon="coord" text="坐标" />
              <Grip />
              <ToolSelect w={44} value="不偏移" label="偏移方式" />
              <Sep />
            </ToolGroup>
            <Spin>X=<SpinBox $w={43}><input defaultValue="0" /><SpinArrows /></SpinBox>mm</Spin>
            <Gap $w={3} />
            <Spin>Y=<SpinBox $w={43}><input defaultValue="0" /><SpinArrows /></SpinBox>mm</Spin>
            <Tick><input type="checkbox" />旋转</Tick>
            <Spin aria-label="旋转角度"><SpinBox $w={50}><input aria-label="角度" defaultValue="0.000" /><SpinArrows /></SpinBox>°</Spin>
          </ToolRow>
        </Main>
      </Work>

      <Status>
        <Cell $w={108} $mono>X=1875 Y=3511</Cell>
        <Cell $w={56}>层高:3m</Cell>
        <Cell $w={71}>底标高:-0.05m</Cell>
        <Cell $w={35}>0</Cell>
        <Cell>按鼠标左键选择需要布筋的板，按右键或ESC取消</Cell>
        <Cell $w={52} $mono>187.8 FPS</Cell>
        <Ime>
          <Icon name="sogou" size={21} />
          <span>A</span>
          <Icon name="comma" />
          <Icon name="smile" />
          <Icon name="micBlue" />
          <Icon name="kb" />
          <Icon name="person" />
          <Icon name="shirt" />
          <Icon name="tiles" size={11} />
        </Ime>
      </Status>

      <Taskbar>
        <StartButton type="button" aria-label="开始"><Icon name="win" /></StartButton>
        <Search>
          <Icon name="ring" size={18} />
          <input type="text" placeholder="在这里输入你要搜索的内容" aria-label="搜索" />
          <Icon name="mic" size={13} />
        </Search>
        <TaskButton type="button" aria-label="任务视图"><Icon name="task" /></TaskButton>
        <TaskButton type="button" aria-label="浏览器" $run><Icon name="max" size={18} /></TaskButton>
        <TaskButton type="button" aria-label="文件资源管理器" $run><Icon name="explorer" size={17} /></TaskButton>
        <TaskButton type="button" aria-label="邮件"><Icon name="mail" size={17} /></TaskButton>
        <TaskButton type="button" aria-label="Edge"><Icon name="ie" size={15} /></TaskButton>
        <TaskButton type="button" aria-label="钢筋算量" $run $on><Icon name="app" size={17} /></TaskButton>
        <Tray>
          <Icon name="sogou" />
          <Gap $w={20} />
          <Icon name="people" />
          <Gap $w={2} />
          <Icon name="up" />
          <Icon name="tri" />
          <Icon name="battery" />
          <Icon name="wifi" size={11} />
          <Icon name="vol" size={13} />
          <Letter>A</Letter>
          <Icon name="sogou" />
          <Clock>8:53<br />2018/9/6</Clock>
          <Icon name="notif" />
          <ShowDesktop />
        </Tray>
      </Taskbar>

      <Watermark viewBox="0 0 186 96" aria-label="Baidu 经验">
        <g fill="#fff" fillOpacity=".7" stroke="#808080" strokeOpacity=".3">
          <ellipse cx="71" cy="26" rx="7" ry="9" transform="rotate(-8 71 26)" />
          <ellipse cx="84" cy="13" rx="6" ry="9" />
          <ellipse cx="100" cy="14" rx="6" ry="9" transform="rotate(8 100 14)" />
          <ellipse cx="110" cy="30" rx="7" ry="8" transform="rotate(12 110 30)" />
          <path d="M90 27c9 0 11 9 17 15 7 6 5 19-6 19-6 0-8-1-12-1s-7 1-12 1c-12 0-13-12-7-18 6-6 10-16 20-16z" />
          <text x="1" y="58" fontFamily="Liberation Sans, sans-serif" fontSize="39" fontWeight="700">Bai</text>
          <text x="119" y="56" fontFamily="Noto Sans CJK SC, sans-serif" fontSize="30" fontWeight="700">经验</text>
          <text x="3" y="81" fontFamily="Open Sans, sans-serif" fontSize="20" fontWeight="600">jingyan.baidu.com</text>
        </g>
        <text x="74" y="56" fontFamily="Liberation Sans, sans-serif" fontSize="26" fontWeight="700" fill="#8f8f8f" fillOpacity=".6">du</text>
      </Watermark>
    </Page>
  );
}
